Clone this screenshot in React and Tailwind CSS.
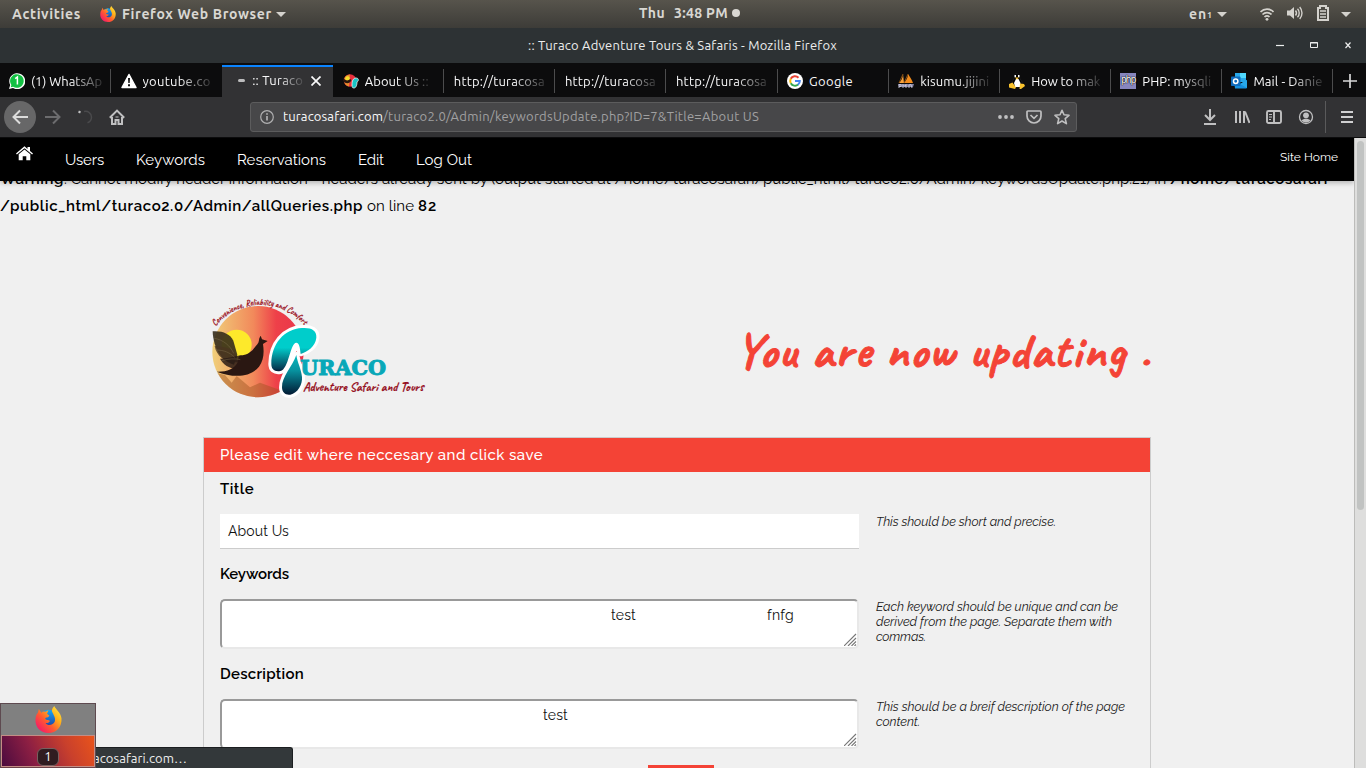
import { useLayoutEffect, useRef } from "react";

const UI = "font-['Ubuntu','Noto_Sans',sans-serif]";
const BODY = "font-['Raleway','Lato',sans-serif]";

/* Text that spreads its letters so that it fills a given width. */
function Fit({ w, className = "", children }) {
  const ref = useRef(null);
  useLayoutEffect(() => {
    const el = ref.current;
    el.style.letterSpacing = "0px";
    const natural = el.getBoundingClientRect().width;
    el.style.letterSpacing = `${(w - natural) / el.textContent.length}px`;
  }, [w, children]);
  return (
    <span ref={ref} className={`inline-block shrink-0 whitespace-pre ${className}`}>
      {children}
    </span>
  );
}

const Caret = () => (
  <svg width="10" height="5" viewBox="0 0 10 5" className="shrink-0">
    <path d="M0 0h10L5 5z" fill="#d4d2cd" />
  </svg>
);

function Firefox({ size }) {
  return (
    <svg width={size} height={size} viewBox="0 0 28 28" className="shrink-0">
      <defs>
        <linearGradient id={`fx${size}`} x1="1" y1="0" x2="0.1" y2="0.9">
          <stop offset="0" stopColor="#fff44f" />
          <stop offset="0.35" stopColor="#ffb31a" />
          <stop offset="0.65" stopColor="#ff5a30" />
          <stop offset="1" stopColor="#f5156c" />
        </linearGradient>
        <linearGradient id={`gl${size}`} x1="0.5" y1="0" x2="0.5" y2="1">
          <stop offset="0" stopColor="#15a6f5" />
          <stop offset="1" stopColor="#233596" />
        </linearGradient>
      </defs>
      <circle cx="14" cy="14" r="10" fill={`url(#gl${size})`} />
      <path
        d="M4 3 6.500 7C8 5.500 9.500 5.600 10.500 6L14 4.500 12.500 8 15 10C14 12 11 11.500 10.500 13 11 15 14 14 15.500 15.500 14 18 12 17.500 11 17.500 13 21 19 20 20.500 16 22 12 18 8 17.500 5 17.500 3 19 1 20 0c1 3 7 7 7.500 13C28 22 22 28 14 28S0 22 .5 14C.6 10 2 8 3 7z"
        fill={`url(#fx${size})`}
      />
    </svg>
  );
}

function Favicon({ kind }) {
  const p = { width: 16, height: 16, viewBox: "0 0 16 16", className: "shrink-0" };
  switch (kind) {
    case "whatsapp":
      return (
        <svg {...p}>
          <path d="M0 16 1.200 12A8 8 0 1 1 4 15z" fill="#fff" />
          <path d="M1.700 14.300 2.400 12A6.800 6.800 0 1 1 4.200 13.700z" fill="#12c143" />
          <path d="M6.200 5.700 8.400 4v7.500" fill="none" stroke="#fff" strokeWidth="1.500" />
        </svg>
      );
    case "warn":
      return (
        <svg {...p}>
          <path d="M8 1.500 15 14.500H1z" fill="#fff" stroke="#fff" strokeWidth="1.500" strokeLinejoin="round" />
          <path d="M7 5h2l-.3 5H7.300zM7 11.200h2v2H7z" fill="#111" />
        </svg>
      );
    case "turaco":
      return (
        <svg {...p}>
          <circle cx="7" cy="7.500" r="6.200" fill="#e8303e" />
          <path d="M1 7a6 6 0 0 1 6-5.500L6 13.500A6 6 0 0 1 1 7z" fill="#e88a2c" />
          <circle cx="4.500" cy="5.500" r="2.300" fill="#f5e02d" />
          <path d="M0 4.500c2 3 5 4 7 1.500l1.500 1c-1.500 4-6 4-8 1.500z" fill="#26160f" />
          <path d="M9 12c0-4 1-7 4-7 3 0 3 3 1 4 0 3-1 6-3 6s-2-1-2-3z" fill="#17c4c6" stroke="#fff" strokeWidth=".7" />
        </svg>
      );
    case "google":
      return (
        <svg {...p}>
          <circle cx="8" cy="8" r="8" fill="#fff" />
          <g fill="none" strokeWidth="2">
            <path d="M11.500 4.700A4.800 4.800 0 0 0 3.700 5.800" stroke="#ea4335" />
            <path d="M3.800 5.700a4.800 4.800 0 0 0 0 4.600" stroke="#fbbc05" />
            <path d="M3.800 10.200a4.800 4.800 0 0 0 7.300 1.400" stroke="#34a853" />
            <path d="M11 11.700A4.800 4.800 0 0 0 12.800 8H8" stroke="#4285f4" />
          </g>
        </svg>
      );
    case "pma":
      return (
        <svg {...p}>
          <path d="M5 1 6 10H1C3 8 5 5 5 1z" fill="#f9a13a" />
          <path d="M10 1c2 3 4 6 5 9H6C8 7 10 5 10 1z" fill="#f28b1c" />
          <path d="M5 1 1 10M10 1 6 10" stroke="#b86a18" strokeWidth=".7" />
          <path d="M0 11h16l-1 3H1z" fill="#8584a3" />
          <path d="M1 15v-3.500h2v2H1M5 15v-3.500l2 2 1-2V15M11 15v-3l2-.5 1 3.500" fill="none" stroke="#c9c8dc" strokeWidth=".9" />
        </svg>
      );
    case "tux":
      return (
        <svg {...p}>
          <path d="M6 1c2-1 4 0 4 3l3 5v5H4L3 9l3-5z" fill="#050505" stroke="#333" strokeWidth=".4" />
          <path d="M7 6h2.500l2 4-.5 4H6L5 10z" fill="#fff" />
          <path d="M5.500 2h1.500v2.300H5.500zM9 2h1.500v2.300H9z" fill="#fff" />
          <path d="M6 4.500h4L8 6.800zM0 11l3.500-1.500L7 14.500 6 16l-6-1.500zM11 10.500l4 .5 1 2-4 3h-1.500z" fill="#f9c22d" />
        </svg>
      );
    case "php":
      return (
        <span className="flex h-4 w-4 shrink-0 items-center justify-center bg-[#8786bd] pb-0.5 font-['Liberation_Sans',sans-serif] text-[10px] leading-none tracking-[-0.6px] text-white [text-shadow:0_0_1px_#000,0_0_1px_#000,0_0_1px_#000]">
          php
        </span>
      );
    case "outlook":
      return (
        <svg {...p}>
          <path d="M4 0h11v9H4z" fill="#28a8ea" />
          <path d="M9 0h6v5H9z" fill="#50d9ff" />
          <path d="M3 8l6 3 7-4v7.500a1 1 0 0 1-1 1H4z" fill="#1490df" />
          <path d="M16 7v8L9 11z" fill="#28a8ea" />
          <rect y="3.500" width="9.500" height="9.500" rx=".8" fill="#0f6cbd" />
          <circle cx="4.700" cy="8.200" r="2.200" fill="none" stroke="#fff" strokeWidth="1.500" />
        </svg>
      );
    default:
      return null;
  }
}

const TABS = [
  { icon: "whatsapp", text: "(1) WhatsAp", w: 71 },
  { icon: "warn", text: "youtube.co", w: 68 },
  { active: true },
  { icon: "turaco", text: "About Us ::", w: 64 },
  { text: "http://turacosa", w: 91 },
  { text: "http://turacosa", w: 91 },
  { text: "http://turacosa", w: 91 },
  { icon: "google", text: "Google", w: 44 },
  { icon: "pma", text: "kisumu.jijini", w: 69 },
  { icon: "tux", text: "How to mak", w: 69 },
  { icon: "php", text: "PHP: mysqli", w: 69 },
  { icon: "outlook", text: "Mail - Danie", w: 69 },
];

function Tab({ t }) {
  if (t.active)
    return (
      <div className="flex h-full w-[111px] shrink-0 items-center border-t-2 border-[#0a84ff] bg-[#323234] pl-4">
        <span className="mt-[-3px] h-[3px] w-[7px] rounded-full bg-[#bdbdbe]" />
        <div className="mt-[-2px] ml-[7px] w-[52px] overflow-hidden [mask-image:linear-gradient(to_right,#000_50%,transparent_105%)]">
          <Fit w={51}>:: Turaco</Fit>
        </div>
        <svg width="10" height="10" viewBox="0 0 10 10" className="mt-[-2px] ml-[7px]">
          <path d="M.5.5l9 9M9.500.5l-9 9" stroke="#f9f9fa" strokeWidth="1.700" />
        </svg>
      </div>
    );
  return (
    <div className="flex h-full w-[111.100px] shrink-0 items-center">
      <div className={`flex flex-1 items-center overflow-hidden ${t.icon === "whatsapp" ? "pl-[9px]" : "pl-[9.500px]"}`}>
        <Favicon kind={t.icon} />
        <div
          className={`${t.icon ? "ml-1.5" : ""} h-8 leading-[32px] ${
            t.text === "Google" ? "" : "[mask-image:linear-gradient(to_right,#000_calc(100%-32px),rgba(0,0,0,0.15))]"
          }`}
        >
          <Fit w={t.w}>{t.text}</Fit>
        </div>
      </div>
      <span className={`h-6 w-px shrink-0 ${t.icon === "warn" ? "bg-transparent" : "bg-[#4c4c4d]"}`} />
    </div>
  );
}

function TopBar() {
  return (
    <div className={`flex h-7 items-center bg-linear-to-b from-[#57544c] to-[#3d3c38] text-[14px] font-bold text-[#d9d7d2] ${UI}`}>
      <div className="flex w-[639px] items-center pl-3">
        <Fit w={69}>Activities</Fit>
        <span className="w-[19px]" />
        <Firefox size={16} />
        <span className="w-1.5" />
        <Fit w={150}>Firefox Web Browser</Fit>
        <span className="w-1" />
        <Caret />
      </div>
      <Fit w={26} className="-mt-0.5">Thu</Fit>
      <span className="w-[9px]" />
      <Fit w={54} className="-mt-0.5">3:48 PM</Fit>
      <span className="-mt-0.5 ml-1 h-2 w-2 rounded-full bg-[#d9d7d2]" />
      <div className="flex flex-1 items-center justify-end pr-[15px]">
        <Fit w={18}>en</Fit>
        <span className="mt-1 w-2.5 text-[9px]">1</span>
        <Caret />
        <svg width="14" height="13" viewBox="0 0 14 13" className="ml-[33px]" fill="none" stroke="#d4d2cd" strokeWidth="1.700">
          <path d="M.5 4a9 9 0 0 1 13 0M2.500 6.500a6.500 6.500 0 0 1 9 0M4.500 9a3.600 3.600 0 0 1 5 0" />
          <circle cx="7" cy="11.300" r="1.400" fill="#d4d2cd" stroke="none" />
        </svg>
        <svg width="16" height="14" viewBox="0 0 16 14" className="-mt-0.5 ml-[13px]" fill="none" stroke="#d4d2cd" strokeWidth="1.400">
          <path d="M0 4.500h3L7 1v12L3 9.500H0z" fill="#d4d2cd" stroke="none" />
          <path d="M8.500 4.500a4 4 0 0 1 0 5M10.500 2.800a6 6 0 0 1 0 8.400M12.700 1a9 9 0 0 1 0 12" />
        </svg>
        <svg width="12" height="16" viewBox="0 0 12 16" className="-mt-0.5 ml-[14px]" fill="none" stroke="#d4d2cd" strokeWidth="2">
          <path d="M1 3h2V1h6v2h2v12H1z" />
          <path d="M3 6h6M3 9h6M3 12h6" strokeWidth="1.600" />
        </svg>
        <span className="w-3" />
        <Caret />
      </div>
    </div>
  );
}

function TitleBar() {
  return (
    <div className={`flex h-[35px] items-center bg-[#2d3234] text-[13px] text-[#eceded] ${UI}`}>
      <div className="flex w-[1275px] pl-[528px]">
        <Fit w={309}>:: Turaco Adventure Tours &amp; Safaris - Mozilla Firefox</Fit>
      </div>
      <svg width="76" height="9" viewBox="0 0 76 9" fill="none" stroke="#eceded">
        <path d="M1 4.500h8" strokeWidth="1.200" />
        <path d="M35.500 1.500h7v5h-7zM35 2h8" />
        <path d="M70.500 1.500l5 5.500M75.500 1.500l-5 5.500" strokeWidth="1.200" />
      </svg>
    </div>
  );
}

const Cell = ({ children, className = "" }) => (
  <div className={`flex h-8 w-8 shrink-0 items-center justify-center ${className}`}>{children}</div>
);
const Ico = ({ children, w = 2, c = "#c0c0c1", className = "" }) => (
  <svg width="16" height="16" viewBox="0 0 16 16" fill="none" stroke={c} strokeWidth={w} className={className}>
    {children}
  </svg>
);

function ToolBar() {
  return (
    <div className={`flex h-[41px] items-center border-b border-[#0c0c0d] bg-[#323234] pl-1 text-[13px] ${UI}`}>
      <Cell className="rounded-full bg-[#676768]">
        <Ico c="#dcdcdc"><path d="M16 8H1.500M8 1.500 1.500 8 8 14.500" /></Ico>
      </Cell>
      <Cell className="ml-px"><Ico c="#6c6c6e"><path d="M0 8h14.500M8 1.500 14.500 8 8 14.500" /></Ico></Cell>
      <Cell>
        <Ico c="#4a4a4c" w="1.500">
          <path d="M7 2.500c4-1 7.500 2 7.500 5.500 0 3-2 5-4 5.700" />
          <path d="M1.500 2.500 3.500 3.500" stroke="#c0c0c1" strokeWidth="2" />
        </Ico>
      </Cell>
      <Cell>
        <Ico>
          <path d="M.8 8.800 8 1.600l7.200 7.200M3 8v7h3.500v-4h3v4H13V8" />
          <path d="M6.500 8h3" strokeWidth="1" />
        </Ico>
      </Cell>
      <div className="ml-[117px] flex h-[30px] w-[827px] items-center rounded-[3px] border border-[#5c5c5d] bg-[#474749] pl-[9px] text-[#a0a0a1]">
        <svg width="14" height="14" viewBox="0 0 14 14" fill="none" stroke="#b0b0b1">
          <circle cx="7" cy="7" r="6.300" strokeWidth="1.200" />
          <path d="M7 6v4.500M7 3.300v1.500" strokeWidth="1.700" />
        </svg>
        <Fit w={100} className="ml-[9px] text-[#f9f9fa]">turacosafari.com</Fit>
        <Fit w={376}>/turaco2.0/Admin/keywordsUpdate.php?ID=7&amp;Title=About US</Fit>
        <div className="flex flex-1 items-center justify-end gap-3 pr-1.5">
          <Ico><g fill="#c0c0c1" stroke="none"><circle cx="2" cy="8" r="1.900" /><circle cx="8" cy="8" r="1.900" /><circle cx="14" cy="8" r="1.900" /></g></Ico>
          <Ico w="1.700">
            <path d="M1.900 2h12.200q.9 0 .9 1v4a7 7 0 0 1-14 0V3q0-1 .9-1z" />
            <path d="M4.500 6 8 9.300 11.500 6" />
          </Ico>
          <Ico w="1.600"><path d="M8 1.300 10 5.800l5 .5-3.800 3.300 1.200 5L8 12l-4.400 2.600 1.200-5L1 6.300l5-.5z" strokeLinejoin="round" /></Ico>
        </div>
      </div>
      <div className="ml-[117px] flex items-center">
        <Cell><Ico><path d="M8 0v10.500M3 6l5 5 5-5M2 15h12" /></Ico></Cell>
        <Cell><Ico w="2"><path d="M2 2v12M6 2v12M10 2v12M11 2.500 15.500 14" /></Ico></Cell>
        <Cell>
          <Ico w="1.900">
            <rect x="1" y="2" width="14" height="12" rx="1.500" />
            <path d="M8 2v12" />
            <path d="M3 5.500h3M3 8h3M3 10.500h2" strokeWidth="1" />
          </Ico>
        </Cell>
        <Cell>
          <Ico w="1.300">
            <circle cx="8" cy="8" r="6.500" />
            <circle cx="8" cy="6.300" r="2.900" fill="#c0c0c1" stroke="none" />
            <path d="M3.500 11.500c2-2.200 7-2.200 9 0a6 6 0 0 1-9 0z" fill="#c0c0c1" stroke="none" />
          </Ico>
        </Cell>
        <span className="ml-[3px] h-8 w-px bg-[#5a5a5b]" />
        <Cell className="ml-[5px]"><Ico c="#d0d0d1"><path d="M2 3h12M2 8h12M2 13h12" /></Ico></Cell>
      </div>
    </div>
  );
}

function Logo() {
  return (
    <svg width="240" height="120" viewBox="0 0 720 360" className="block">
      <defs>
        <linearGradient id="sun" x1="0" x2="1">
          <stop offset="0" stopColor="#f0cf7a" />
          <stop offset="0.45" stopColor="#f2895b" />
          <stop offset="0.7" stopColor="#ee4049" />
          <stop offset="1" stopColor="#e9344a" />
        </linearGradient>
        <linearGradient id="tee" x1="0" x2="0" y1="110" y2="320" gradientUnits="userSpaceOnUse">
          <stop offset="0.3" stopColor="#00cdcb" />
          <stop offset="0.6" stopColor="#053a53" />
          <stop offset="0.63" stopColor="#021d38" />
        </linearGradient>
        <linearGradient id="stem" x1="0" x2="0" y1="180" y2="315" gradientUnits="userSpaceOnUse">
          <stop offset="0" stopColor="#05c4c8" />
          <stop offset="0.45" stopColor="#0793a0" />
          <stop offset="1" stopColor="#021832" />
        </linearGradient>
        <path id="arc" d="M47 109A172 172 0 0 1 314 108" />
        <clipPath id="disc"><circle cx="174" cy="185" r="137" /></clipPath>
      </defs>
      <circle cx="174" cy="185" r="137" fill="url(#sun)" />
      <g clipPath="url(#disc)">
        <circle cx="110" cy="164" r="45" fill="#fde92b" />
        <path d="M30 245 75 255 95 278 110 258 150 292 180 278 240 300V330H30z" fill="#9c5320" opacity=".45" />
      </g>
      <path d="M38 124c30-2 52 8 62 28l12 42-10 30c-36-8-62-48-64-100z" fill="#352c1c" opacity=".9" />
      <path d="M44 168c20 2 42 4 58 14l14 34c-36 4-66-14-72-48z" fill="#4a3620" opacity=".8" />
      <path d="M60 206c24 0 44-8 64-10l20 14-30 26c-24 2-44-12-54-30z" fill="#291b15" opacity=".85" />
      <path d="M50 245c30 1 52-8 62-26 4-10 2-18 6-22 18 0 34-8 44-22 8-10 14-14 15-24 0-4 1-8 5-14l4 11 17 5-14 9c4 25 2 50-12 68-28 36-82 32-127 15z" fill="#2a1712" />
      <path d="M43 145c26 4 48 22 58 45M48 180c24 0 42 8 56 22M65 212c22-6 40-7 56-3" fill="none" stroke="#82724e" strokeWidth="2" opacity=".65" />
      <text fontSize="28" fill="#9c1424" stroke="#9c1424" strokeWidth=".5" fontWeight="bold" fontFamily="'Caveat', 'Liberation Serif', serif">
        <textPath href="#arc" textLength="302" lengthAdjust="spacingAndGlyphs">Convenience, Reliability and Comfort</textPath>
      </text>
      <g stroke="#fff" strokeWidth="18" strokeLinejoin="round" fill="#fff">
        <path d="M214 222c0-60 38-105 92-108 28-2 45 7 43 29-3 27-27 42-47 47l-13-29c-18 30-20 77-48 82-18 3-27-6-27-21z" />
        <path d="M289 195c-12 35-44 65-43 97 0 17 12 24 25 22 22-4 37-31 35-53-2-24-14-43-17-66z" />
      </g>
      <path d="M214 222c0-60 38-105 92-108 28-2 45 7 43 29-3 27-27 42-47 49-2-18-4-34-13-34-19 0-22 80-48 85-18 3-27-6-27-21z" fill="url(#tee)" />
      <path d="M289 195c-12 35-44 65-43 97 0 17 12 24 25 22 22-4 37-31 35-53-2-24-14-43-17-66z" fill="url(#stem)" />
      <text x="301" y="254" fontSize="59" fontWeight="bold" fill="#08a8b8" stroke="#08a8b8" strokeWidth="3" textLength="257" lengthAdjust="spacingAndGlyphs" fontFamily="'DejaVu Serif', serif">URACO</text>
      <text x="309" y="302" fontSize="40" fontWeight="bold" fill="#96101f" stroke="#96101f" strokeWidth=".5" textLength="362" lengthAdjust="spacingAndGlyphs" fontFamily="'Caveat', 'Liberation Serif', serif">Adventure Safari and Tours</text>
    </svg>
  );
}

function Nav() {
  return (
    <div className="absolute inset-x-0 top-0 z-10 flex h-[43px] items-start bg-black text-[15px] text-white shadow-[0_2px_5px_rgba(0,0,0,0.25)]">
      <svg width="17" height="15" viewBox="0 0 17 15" className="mt-2 ml-4 mr-[32px]">
        <path d="M0 7.500 8.500.3l3 2.600V1H14v4l3 2.500-.9 1L8.500 2.200.9 8.500z" fill="#fff" />
        <path d="M2.700 8.300 8.500 3.500l5.800 4.800v6h-4v-4H6.700v4h-4z" fill="#fff" />
      </svg>
      <div className="flex flex-1 gap-8 pt-[11px]">
        <Fit w={39}>Users</Fit>
        <Fit w={69}>Keywords</Fit>
        <Fit w={89}>Reservations</Fit>
        <Fit w={26}>Edit</Fit>
        <Fit w={56}>Log Out</Fit>
      </div>
      <Fit w={58} className="mt-2.5 mr-4 text-[12px]">Site Home</Fit>
    </div>
  );
}

const Grip = () => (
  <svg width="13" height="13" viewBox="0 0 13 13" className="absolute right-0 bottom-px" stroke="#777" strokeWidth="1.100">
    <path d="M0 13 12 1M4 13l8-8M7.500 13l4.500-4.500M10.500 13 12 11.500" />
  </svg>
);

function Hint({ lines }) {
  return (
    <div className="ml-[17px] flex flex-col items-start text-[12.500px] leading-[15px] text-[#1a1a1a] italic">
      {lines.map(([text, w]) => (
        <Fit key={text} w={w}>{text}</Fit>
      ))}
    </div>
  );
}

function Area({ children }) {
  return (
    <div className="relative h-[50px] w-[639px] shrink-0 rounded-[5px] border-2 border-t-[#999] border-r-[#e8e8e8] border-b-[#e8e8e8] border-l-[#999] bg-white text-[14px] leading-[17px] text-[#111]">
      <div className="flex pt-1.5">{children}</div>
      <Grip />
    </div>
  );
}

function Page() {
  return (
    <div className={`relative h-[630px] flex-1 overflow-hidden bg-[#f0f0f0] text-[15px] text-black ${BODY}`}>
      <Nav />
      <div className="mt-[28px] leading-[27px]">
        <div className="flex">
          <Fit w={64} className="font-semibold">Warning</Fit>
          <Fit w={1106}>{": Cannot modify header information - headers already sent by (output started at /home/turacosafari/public_html/turaco2.0/Admin/keywordsUpdate.php:21) in "}</Fit>
          <Fit w={158} className="font-semibold">/home/turacosafari</Fit>
        </div>
        <div className="flex">
          <Fit w={363} className="font-semibold">/public_html/turaco2.0/Admin/allQueries.php</Fit>
          <Fit w={55}>{" on line "}</Fit>
          <Fit w={19} className="font-semibold">82</Fit>
        </div>
      </div>
      <div className="mt-[70px] flex items-start pl-[200px]">
        <Logo />
        <div className="mt-[36px] ml-[296px] font-['Caveat','Lato',cursive] text-[48px] leading-[50px] font-bold text-[#f44336] [-webkit-text-stroke:1px_#f44336]">
          <Fit w={415}>You are now updating .</Fit>
        </div>
      </div>
      <div className="mt-[27px] ml-[203px] h-[340px] w-[948px] border border-[#ccc]">
        <div className="flex h-[34px] items-center bg-[#f44336] pl-4 font-medium text-white">
          <Fit w={323}>Please edit where neccesary and click save</Fit>
        </div>
        <div className="pl-4">
          <div className="h-[42px] pt-[5px] leading-6 font-semibold"><Fit w={34}>Title</Fit></div>
          <div className="flex h-[35px]">
            <div className="w-[639px] border-b border-[#ccc] bg-white pt-1.5 pl-2 text-[14px] leading-[22px] text-[#111]">
              <Fit w={61}>About Us</Fit>
            </div>
            <Hint lines={[["This should be short and precise.", 180]]} />
          </div>
          <div className="h-[50px] pt-[13px] leading-6 font-semibold"><Fit w={69}>Keywords</Fit></div>
          <div className="flex h-[50px]">
            <Area>
              <Fit w={25} className="ml-[389px]">test</Fit>
              <Fit w={27} className="ml-[131px]">fnfg</Fit>
            </Area>
            <Hint lines={[["Each keyword should be unique and can be", 242], ["derived from the page. Separate them with", 236], ["commas.", 50]]} />
          </div>
          <div className="h-[50px] pt-[13px] leading-6 font-semibold"><Fit w={84}>Description</Fit></div>
          <div className="flex h-[50px]">
            <Area>
              <Fit w={25} className="ml-[321px]">test</Fit>
            </Area>
            <Hint lines={[["This should be a breif description of the page", 249], ["content.", 44]]} />
          </div>
          <div className="mt-4 ml-[428px] h-9 w-[66px] bg-[#f44336]" />
        </div>
      </div>
    </div>
  );
}

function Overlays() {
  return (
    <div className={`absolute bottom-0 left-0 flex h-[65px] w-[293px] items-end ${UI}`}>
      <div className="absolute bottom-0 left-0 h-[21px] w-[293px] rounded-tr-[3px] border-t border-r border-[#1b1e20] bg-[#33383a] pl-[93px] text-[13px] leading-[21px] text-[#eee]">
        <Fit w={94}>acosafari.com…</Fit>
      </div>
      <div className="relative flex h-[65px] w-24 flex-col border border-b-0 border-[#5e4a50]">
        <div className="flex h-[31px] items-center justify-center bg-[#808080]"><Firefox size={27} /></div>
        <div className="flex h-[32px] items-end justify-center border border-[#c48d85] bg-[linear-gradient(65deg,#4b0b3f_0%,#8d1f43_35%,#c9402c_70%,#e9541b_100%)]">
          <span className="flex h-[18px] w-[22px] items-center justify-center rounded-[6px] border border-[#76605f] bg-[#301c20] text-[13px] text-white">1</span>
        </div>
        <div className="h-px bg-[#6b4248]" />
      </div>
    </div>
  );
}

export default function App() {
  return (
    <div className="relative flex h-[768px] w-[1366px] flex-col overflow-hidden bg-[#0c0c0d]">
      <TopBar />
      <TitleBar />
      <div className={`flex h-[34px] bg-[#0c0c0d] pt-0.5 text-[13px] text-[#f9f9fa] ${UI}`}>
        {TABS.map((t, i) => (
          <Tab key={i} t={t} />
        ))}
        <div className="flex flex-1 items-center justify-center">
          <svg width="14" height="14" viewBox="0 0 14 14" stroke="#d8d8d9" strokeWidth="1.700">
            <path d="M7 0v14M0 7h14" />
          </svg>
        </div>
      </div>
      <ToolBar />
      <div className="flex h-[630px]">
        <Page />
        <div className="w-3 border-l border-[#bcbcba] bg-[#dededd] px-[2px] pt-[3px]">
          <div className="h-[369px] w-[7px] rounded-full bg-[#c1c3c2]" />
        </div>
      </div>
      <Overlays />
    </div>
  );
}
